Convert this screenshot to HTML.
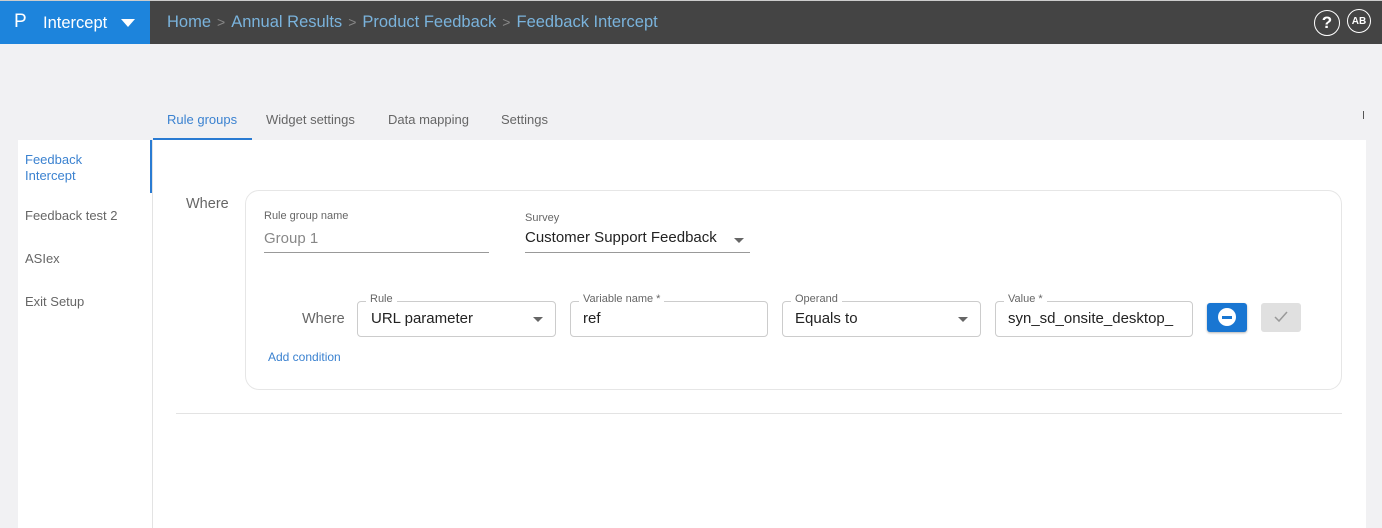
<!DOCTYPE html>
<html><head><style>
*{box-sizing:border-box;margin:0;padding:0}
body{width:1382px;height:528px;background:#f1f1f3;font-family:"Liberation Sans",Roboto,sans-serif;position:relative;overflow:hidden}
.a{position:absolute}
.top{left:0;top:0;width:1382px;height:44px;background:#444;border-top:1px solid #ccc}
.brand{left:0;top:1px;width:150px;height:43px;background:#1d84dc;color:#fff}
.bc{left:167px;top:13px;font-size:16.5px;color:#7ab3dc;white-space:nowrap}
.bc span.s{color:#888;margin:0 6px;font-size:14px}
.tab{top:112px;font-size:13px;color:#666}
.lbl{font-size:11px;color:#666;background:#fff;padding:0 4px}
.box{border:1px solid #ccc;border-radius:4px;height:36px;background:#fff}
.txt{font-size:15px;color:#222}
.tri{width:0;height:0;border-left:5px solid transparent;border-right:5px solid transparent;border-top:5px solid #666}
.circ{display:flex;align-items:center;justify-content:center;border:1.5px solid #fff;border-radius:50%;color:#fff;font-weight:bold}
</style></head><body>
<div class="a top"></div>
<div class="a brand">
 <div class="a" style="left:14px;top:10px;color:#fff;font-size:19px">P</div>
 <div class="a" style="left:43px;top:13px;font-size:16.5px">Intercept</div>
 <div class="a" style="left:121px;top:18px;border-left:7px solid transparent;border-right:7px solid transparent;border-top:8px solid #fff"></div>
</div>
<div class="a bc">Home<span class="s">&gt;</span>Annual Results<span class="s">&gt;</span>Product Feedback<span class="s">&gt;</span>Feedback Intercept</div>
<div class="a circ" style="left:1314px;top:10px;width:26px;height:26px;font-size:17px">?</div>
<div class="a circ" style="left:1347px;top:9px;width:24px;height:24px;font-size:10px">AB</div>

<div class="a tab" style="left:167px;color:#3b82d0">Rule groups</div>
<div class="a tab" style="left:266px">Widget settings</div>
<div class="a tab" style="left:388px">Data mapping</div>
<div class="a tab" style="left:501px">Settings</div>
<div class="a" style="left:1363px;top:111px;width:1px;height:8px;background:#555"></div>

<div class="a" style="left:18px;top:140px;width:134px;height:388px;background:#fff"></div>
<div class="a" style="left:153px;top:140px;width:1213px;height:388px;background:#fff"></div>
<div class="a" style="left:152px;top:140px;width:1px;height:388px;background:#e3e3e3"></div>
<div class="a" style="left:150px;top:140px;width:2px;height:53px;background:#2a7bd2"></div>
<div class="a" style="left:153px;top:138px;width:99px;height:2px;background:#2a7bd2"></div>

<div class="a" style="left:25px;top:152px;font-size:13px;color:#3b82d0;line-height:16px">Feedback<br>Intercept</div>
<div class="a" style="left:25px;top:208px;font-size:13px;color:#666">Feedback test 2</div>
<div class="a" style="left:25px;top:251px;font-size:13px;color:#666">ASIex</div>
<div class="a" style="left:25px;top:294px;font-size:13px;color:#666">Exit Setup</div>

<div class="a" style="left:186px;top:196px;font-size:14.5px;color:#666">Where</div>
<div class="a" style="left:245px;top:190px;width:1097px;height:200px;border:1px solid #e6e6e6;border-radius:14px;background:#fff"></div>
<div class="a" style="left:264px;top:210px;font-size:11px;color:#666">Rule group name</div>
<div class="a" style="left:264px;top:230px;font-size:15px;color:#888">Group 1</div>
<div class="a" style="left:264px;top:252px;width:225px;height:1px;background:#999"></div>
<div class="a" style="left:525px;top:212px;font-size:11px;color:#666">Survey</div>
<div class="a txt" style="left:525px;top:229px">Customer Support Feedback</div>
<div class="a tri" style="left:734px;top:238px"></div>
<div class="a" style="left:525px;top:252px;width:225px;height:1px;background:#999"></div>

<div class="a" style="left:302px;top:311px;font-size:14.5px;color:#666">Where</div>
<div class="a box" style="left:357px;top:301px;width:199px"></div>
<div class="a lbl" style="left:366px;top:293px">Rule</div>
<div class="a txt" style="left:371px;top:310px">URL parameter</div>
<div class="a tri" style="left:533px;top:317px"></div>
<div class="a box" style="left:570px;top:301px;width:198px"></div>
<div class="a lbl" style="left:579px;top:293px">Variable name *</div>
<div class="a txt" style="left:583px;top:310px">ref</div>
<div class="a box" style="left:782px;top:301px;width:199px"></div>
<div class="a lbl" style="left:791px;top:293px">Operand</div>
<div class="a txt" style="left:795px;top:310px">Equals to</div>
<div class="a tri" style="left:958px;top:317px"></div>
<div class="a box" style="left:995px;top:301px;width:198px"></div>
<div class="a lbl" style="left:1004px;top:293px">Value *</div>
<div class="a txt" style="left:1008px;top:310px">syn_sd_onsite_desktop_</div>
<div class="a" style="left:1207px;top:303px;width:40px;height:29px;background:#1976d2;border-radius:3px;box-shadow:0 1px 2px rgba(0,0,0,.3)">
 <div class="a" style="left:11px;top:5px;width:18px;height:18px;border-radius:50%;background:#fff"></div>
 <div class="a" style="left:15px;top:13px;width:10px;height:3px;background:#1976d2"></div>
</div>
<div class="a" style="left:1261px;top:303px;width:40px;height:29px;background:#e0e0e0;border-radius:3px">
 <svg class="a" style="left:12px;top:7px" width="16" height="14" viewBox="0 0 16 14"><path d="M2 7l4 4 8-9" fill="none" stroke="#999" stroke-width="1.5"/></svg>
</div>
<div class="a" style="left:268px;top:350px;font-size:12px;color:#3b82d0">Add condition</div>
<div class="a" style="left:176px;top:413px;width:1166px;height:1px;background:#e3e3e3"></div>
</body></html>
